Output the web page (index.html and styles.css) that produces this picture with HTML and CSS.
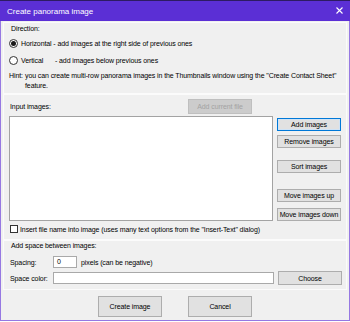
FILE: index.html
```html
<!DOCTYPE html>
<html lang="en">
<head>
<meta charset="UTF-8">
<title>Create panorama image</title>
<link rel="stylesheet" href="styles.css">
</head>
<body>
<div class="window">
    <div class="titlebar">
        <span class="title">Create panorama image</span>
        <svg class="close" width="7" height="7" viewBox="0 0 7 7">
            <path d="M0.5 0.5 L6.5 6.5 M6.5 0.5 L0.5 6.5" stroke="#ffffff" stroke-width="1.1"/>
        </svg>
    </div>

    <div class="main">
        <div class="group group-direction">
            <div class="label-line">Direction:</div>
            <div class="radio-row first">
                <span class="radio checked"></span>
                <span>Horizontal - add images at the right side of previous ones</span>
            </div>
            <div class="radio-row second">
                <span class="radio"></span>
                <span class="radio-name">Vertical</span>
                <span>- add images below previous ones</span>
            </div>
            <div class="hint">
                <span class="hint-label">Hint:</span>
                <span class="hint-text">you can create multi-row panorama images in the Thumbnails window using the "Create Contact Sheet"<br>feature.</span>
            </div>
        </div>

        <div class="group group-input">
            <div class="list-header">
                <span>Input images:</span>
                <button class="btn disabled add-current">Add current file</button>
            </div>
            <div class="list-row">
                <div class="listbox"></div>
                <div class="side-buttons">
                    <button class="btn default b-add">Add images</button>
                    <button class="btn b-remove">Remove images</button>
                    <button class="btn b-sort">Sort images</button>
                    <button class="btn b-up">Move images up</button>
                    <button class="btn b-down">Move images down</button>
                </div>
            </div>
            <div class="check-row">
                <span class="checkbox"></span>
                <span>Insert file name into image (uses many text options from the "Insert-Text" dialog)</span>
            </div>
        </div>

        <div class="group group-space">
            <div class="label-line">Add space between images:</div>
            <div class="field-row spacing-row">
                <span class="field-label">Spacing:</span>
                <div class="textbox small">0</div>
                <span class="after">pixels (can be negative)</span>
            </div>
            <div class="field-row color-row">
                <span class="field-label">Space color:</span>
                <div class="textbox wide"></div>
                <button class="btn choose">Choose</button>
            </div>
        </div>

        <div class="footer">
            <button class="btn big">Create image</button>
            <button class="btn big">Cancel</button>
        </div>
    </div>
</div>
</body>
</html>
```

FILE: styles.css
```css
body {
    margin: 0;
    padding: 0;
    background: #ffffff;
    font-family: "Liberation Sans", Arial, sans-serif;
    font-size: 7px;
    letter-spacing: -0.1px;
    color: #000;
}

.btn {
    box-sizing: border-box;
    margin: 0;
    padding: 0;
    font-family: "Liberation Sans", Arial, sans-serif;
    font-size: 7px;
    letter-spacing: -0.1px;
    color: #000;
    background: #e1e1e1;
    border: 1px solid #adadad;
    border-radius: 0;
    white-space: nowrap;
}

.btn.default {
    border-color: #0078d7;
    box-shadow: inset 0 0 0 1px #cfe3f6;
}

.btn.disabled {
    background: #cccccc;
    border-color: #bfbfbf;
    color: #a3a3a3;
}

.window {
    width: 350px;
    height: 322px;
}

.titlebar {
    height: 21px;
    box-sizing: border-box;
    background: #5b2fd5;
    border-top: 1px solid #2d1b63;
    display: flex;
    align-items: center;
    justify-content: space-between;
    padding: 0 7px 0 7px;
}

.title {
    color: #ffffff;
    font-size: 8px;
    letter-spacing: 0;
    margin-top: 1px;
}

.close {
    display: block;
    margin-top: -1px;
}

.main {
    height: 300px;
    box-sizing: border-box;
    background: #f0f0f0;
    border-left: 1px solid #9678e2;
    border-right: 1px solid #9678e2;
    border-bottom: 1px solid #9678e2;
    padding: 1px 2px 0 2px;
}

.group {
    box-sizing: border-box;
    border: 1px solid #fbfbfb;
    padding: 0 4px 0 5px;
}

.group-direction {
    height: 72px;
    padding-top: 1px;
}

.label-line {
    height: 10px;
    line-height: 10px;
    padding-left: 2px;
}

.radio-row {
    height: 14px;
    display: flex;
    align-items: center;
}

.radio-row.first {
    margin-top: 2px;
}

.radio-row.second {
    margin-top: 3px;
}

.radio {
    width: 9px;
    height: 9px;
    box-sizing: border-box;
    border: 1px solid #333;
    border-radius: 50%;
    background: #fff;
    margin-right: 3px;
    display: flex;
    align-items: center;
    justify-content: center;
}

.radio.checked::after {
    content: "";
    width: 5px;
    height: 5px;
    border-radius: 50%;
    background: #1b1b1b;
}

.radio-name {
    width: 34px;
}

.hint {
    display: flex;
    margin-top: 4px;
    line-height: 10px;
    white-space: nowrap;
}

.hint-label {
    width: 16px;
    flex: none;
}

.group-input {
    height: 146px;
    padding-top: 4px;
}

.list-header {
    height: 15px;
    display: flex;
    align-items: center;
    padding-left: 1px;
}

.list-header .add-current {
    margin-left: auto;
    margin-right: 90px;
    width: 64px;
    height: 15px;
}

.list-row {
    display: flex;
    align-items: flex-start;
    margin-top: 2px;
}

.listbox {
    width: 264px;
    height: 105px;
    box-sizing: border-box;
    background: #fff;
    border: 1px solid #a3a3a3;
}

.side-buttons {
    display: flex;
    flex-direction: column;
    margin-left: 4px;
}

.side-buttons .btn {
    width: 64px;
    height: 13px;
}

.side-buttons .b-add { margin-top: 2px; }
.side-buttons .b-remove { margin-top: 4px; }
.side-buttons .b-sort { margin-top: 12px; }
.side-buttons .b-up { margin-top: 16px; }
.side-buttons .b-down { margin-top: 6px; }

.check-row {
    height: 10px;
    margin-top: 3px;
    display: flex;
    align-items: center;
}

.checkbox {
    width: 8px;
    height: 8px;
    box-sizing: border-box;
    border: 1px solid #333;
    background: #fff;
    margin: 0 2px 0 1px;
}

.group-space {
    height: 50px;
}

.field-row {
    display: flex;
    align-items: center;
}

.spacing-row {
    height: 12px;
    margin-top: 5px;
}

.color-row {
    height: 14px;
    margin-top: 3px;
}

.field-label {
    width: 43px;
    padding-left: 1px;
}

.textbox {
    height: 12px;
    box-sizing: border-box;
    background: #fff;
    border: 1px solid #a9a9a9;
    line-height: 10px;
    padding-left: 3px;
}

.textbox.small {
    width: 24px;
}

.textbox.wide {
    width: 221px;
}

.after {
    margin-left: 4px;
}

.field-row .choose {
    width: 64px;
    height: 14px;
    margin-left: 4px;
}

.footer {
    display: flex;
    justify-content: center;
    gap: 26px;
    padding-top: 6px;
}

.footer .big {
    width: 64px;
    height: 21px;
}
```
